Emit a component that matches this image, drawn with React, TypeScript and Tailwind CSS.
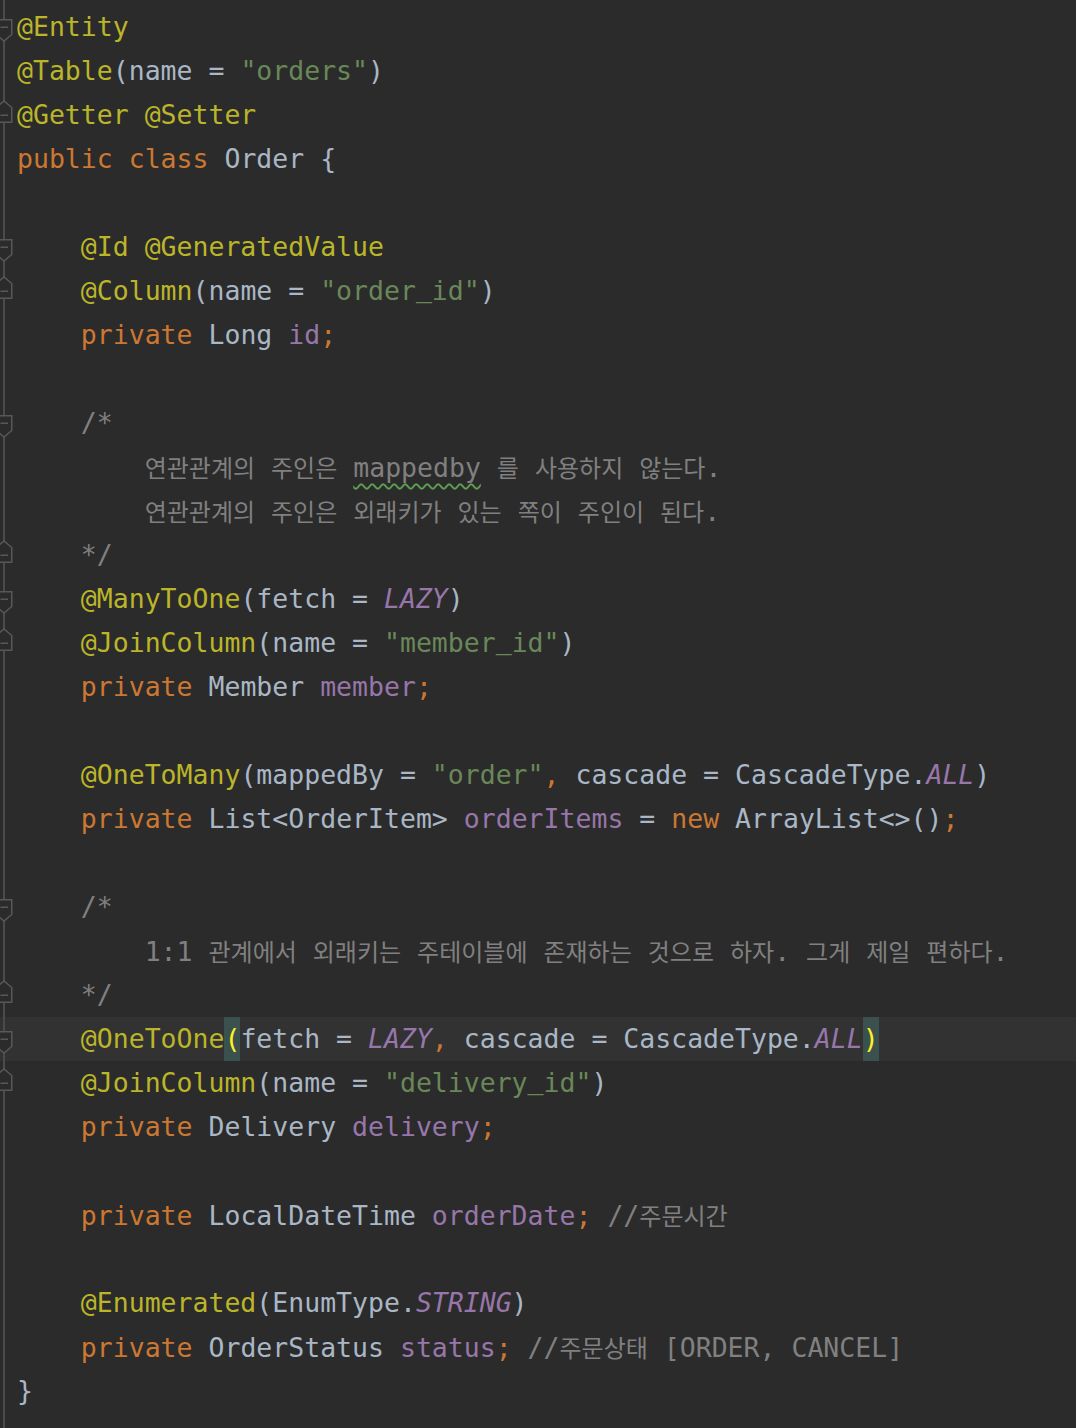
import React from "react";

type Fold = "start" | "end";

const FoldMark = ({ kind }: { kind: Fold }) => (
  <svg
    className="absolute left-0 top-0"
    width="14"
    height="44"
    viewBox="0 0 14 44"
  >
    <path
      d={
        kind === "start"
          ? "M-4 14.75H11.75V29.5L4 36L-4 29.5Z"
          : "M-4 29.25H11.75V14.5L4 8L-4 14.5Z"
      }
      fill="#2b2b2b"
      stroke="#585858"
      strokeWidth="1.5"
    />
    <path d="M0.5 22.25H8" stroke="#585858" strokeWidth="1.5" />
  </svg>
);

const Gutter = ({ fold }: { fold?: Fold }) => (
  <div className="relative flex w-[17px] shrink-0 self-stretch">
    <div className="ml-[3px] w-[2px] bg-[#4b4b4b]" />
    {fold && <FoldMark kind={fold} />}
  </div>
);

const Line = ({
  fold,
  active,
  children,
}: {
  fold?: Fold;
  active?: boolean;
  children?: React.ReactNode;
}) => (
  <div
    className={`flex h-[44px] leading-[44px] whitespace-pre ${
      active ? "bg-[#323232]" : ""
    }`}
  >
    <Gutter fold={fold} />
    <div>{children}</div>
  </div>
);

// korean runs get a cjk font, rest stays mono
const ko = (s: string) =>
  s.split(/([\uAC00-\uD7A3]+)/).map((p, i) =>
    /[\uAC00-\uD7A3]/.test(p) ? (
      <span key={i} className="font-['Noto_Sans_CJK_KR',sans-serif] text-[24px]">
        {p}
      </span>
    ) : (
      <React.Fragment key={i}>{p}</React.Fragment>
    )
  );

// dejavu's underscore sits too low and washes out, use liberation for it
const us = (s: string) =>
  s.split(/(_)/).map((p, i) =>
    p === "_" ? (
      <span key={i} className="font-['Liberation_Mono',monospace] text-[26.6px]">
        _
      </span>
    ) : (
      <React.Fragment key={i}>{p}</React.Fragment>
    )
  );

const Ann = ({ children }: { children: React.ReactNode }) => (
  <span className="text-[#bbb529]">{children}</span>
);
const Kw = ({ children }: { children: React.ReactNode }) => (
  <span className="text-[#cc7832]">{children}</span>
);
const Str = ({ children }: { children: string }) => (
  <span className="text-[#6a8759]">{us(children)}</span>
);
const Fld = ({ children }: { children: React.ReactNode }) => (
  <span className="text-[#9876aa]">{children}</span>
);
const It = ({ children }: { children: React.ReactNode }) => (
  <span className="text-[#9876aa] italic">{children}</span>
);
const Cm = ({ children }: { children: React.ReactNode }) => (
  <span className="text-[#808080]">{children}</span>
);
const Brace = ({ children }: { children: React.ReactNode }) => (
  <span className="inline-block bg-[#3b514d] text-[#ffef28]">{children}</span>
);

export default function App() {
  return (
    <div className="flex min-h-[1428px] flex-col bg-[#2b2b2b] font-['DejaVu_Sans_Mono',monospace] text-[26.5px] text-[#a9b7c6]">
      <div className="flex h-[5px]">
        <Gutter />
      </div>
      <Line fold="start">
        <Ann>@Entity</Ann>
      </Line>
      <Line>
        <Ann>@Table</Ann>(name = <Str>"orders"</Str>)
      </Line>
      <Line fold="end">
        <Ann>@Getter @Setter</Ann>
      </Line>
      <Line>
        <Kw>public class </Kw>Order {"{"}
      </Line>
      <Line />
      <Line fold="start">
        {"    "}
        <Ann>@Id @GeneratedValue</Ann>
      </Line>
      <Line fold="end">
        {"    "}
        <Ann>@Column</Ann>(name = <Str>"order_id"</Str>)
      </Line>
      <Line>
        {"    "}
        <Kw>private </Kw>Long <Fld>id</Fld>
        <Kw>;</Kw>
      </Line>
      <Line />
      <Line fold="start">
        <Cm>{"    /*"}</Cm>
      </Line>
      <Line>
        <Cm>
          {"        "}
          {ko("연관관계의 주인은 ")}
          <span className="underline decoration-wavy decoration-[#5e9e50] decoration-2 underline-offset-[6px]">
            mappedby
          </span>
          {ko(" 를 사용하지 않는다.")}
        </Cm>
      </Line>
      <Line>
        <Cm>
          {"        "}
          {ko("연관관계의 주인은 외래키가 있는 쪽이 주인이 된다.")}
        </Cm>
      </Line>
      <Line fold="end">
        <Cm>{"    */"}</Cm>
      </Line>
      <Line fold="start">
        {"    "}
        <Ann>@ManyToOne</Ann>(fetch = <It>LAZY</It>)
      </Line>
      <Line fold="end">
        {"    "}
        <Ann>@JoinColumn</Ann>(name = <Str>"member_id"</Str>)
      </Line>
      <Line>
        {"    "}
        <Kw>private </Kw>Member <Fld>member</Fld>
        <Kw>;</Kw>
      </Line>
      <Line />
      <Line>
        {"    "}
        <Ann>@OneToMany</Ann>(mappedBy = <Str>"order"</Str>
        <Kw>,</Kw> cascade = CascadeType.<It>ALL</It>)
      </Line>
      <Line>
        {"    "}
        <Kw>private </Kw>List{"<"}OrderItem{">"} <Fld>orderItems</Fld> ={" "}
        <Kw>new </Kw>ArrayList{"<>"}()<Kw>;</Kw>
      </Line>
      <Line />
      <Line fold="start">
        <Cm>{"    /*"}</Cm>
      </Line>
      <Line>
        <Cm>
          {"        "}
          {ko("1:1 관계에서 외래키는 주테이블에 존재하는 것으로 하자. 그게 제일 편하다.")}
        </Cm>
      </Line>
      <Line fold="end">
        <Cm>{"    */"}</Cm>
      </Line>
      <Line fold="start" active>
        {"    "}
        <Ann>@OneToOne</Ann>
        <Brace>(</Brace>fetch = <It>LAZY</It>
        <Kw>,</Kw> cascade = CascadeType.<It>ALL</It>
        <Brace>)</Brace>
      </Line>
      <Line fold="end">
        {"    "}
        <Ann>@JoinColumn</Ann>(name = <Str>"delivery_id"</Str>)
      </Line>
      <Line>
        {"    "}
        <Kw>private </Kw>Delivery <Fld>delivery</Fld>
        <Kw>;</Kw>
      </Line>
      <Line />
      <Line>
        {"    "}
        <Kw>private </Kw>LocalDateTime <Fld>orderDate</Fld>
        <Kw>;</Kw> <Cm>{ko("//주문시간")}</Cm>
      </Line>
      <Line />
      <Line>
        {"    "}
        <Ann>@Enumerated</Ann>(EnumType.<It>STRING</It>)
      </Line>
      <Line>
        {"    "}
        <Kw>private </Kw>OrderStatus <Fld>status</Fld>
        <Kw>;</Kw> <Cm>{ko("//주문상태 [ORDER, CANCEL]")}</Cm>
      </Line>
      <Line>{"}"}</Line>
      <div className="flex flex-1">
        <Gutter />
      </div>
    </div>
  );
}
